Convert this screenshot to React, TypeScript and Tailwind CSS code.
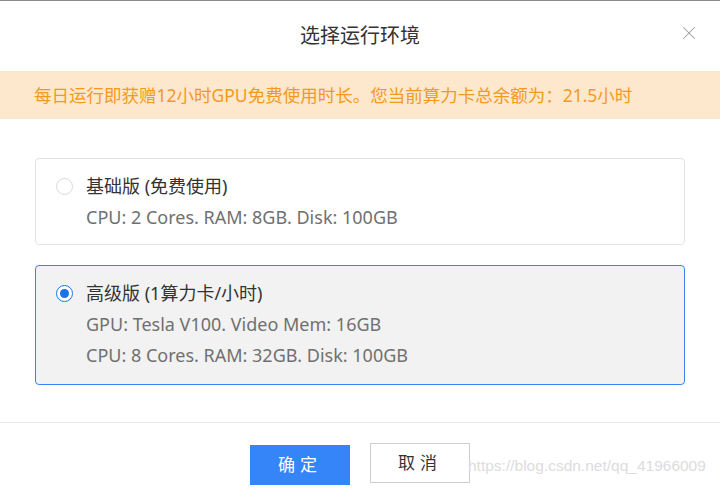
import { X } from 'lucide-react';

const font = { fontFamily: '"Noto Sans", "Noto Sans CJK SC", sans-serif' };

function Radio({ checked }: { checked: boolean }) {
  return checked ? (
    <span className="flex h-[17px] w-[17px] shrink-0 items-center justify-center rounded-full border-[1.5px] border-[#1a73e8] bg-white">
      <span className="h-[9px] w-[9px] rounded-full bg-[#1a73e8]" />
    </span>
  ) : (
    <span className="h-[17px] w-[17px] shrink-0 rounded-full border border-[#d9d9d9] bg-white" />
  );
}

export default function App() {
  return (
    <div
      className="relative h-[497px] w-[720px] overflow-hidden border-t border-[#8a8a8a] bg-white"
      style={font}
    >
      <div className="relative flex h-[70px] items-center justify-center">
        <span className="text-[20px] text-[#333]">选择运行环境</span>
        <button className="absolute right-[20px] top-[21px] text-[#a0a0a0]">
          <X size={22} strokeWidth={1.1} />
        </button>
      </div>

      <div className="flex h-[48px] items-center bg-[#fde7cd] px-[34px] text-[17.5px] text-[#f39a1e]">
        每日运行即获赠12小时GPU免费使用时长。您当前算力卡总余额为：21.5小时
      </div>

      <div className="flex flex-col gap-[20px] px-[35px] pt-[39px]">
        <div className="flex items-start gap-[13px] rounded border border-[#e3e3e3] bg-white pb-[11px] pl-[20px] pt-[12px]">
          <div className="flex h-[31px] items-center">
            <Radio checked={false} />
          </div>
          <div className="flex flex-col text-[18px] leading-[31px]">
            <span className="text-[#333]">基础版 (免费使用)</span>
            <span className="text-[#707070]">CPU: 2 Cores. RAM: 8GB. Disk: 100GB</span>
          </div>
        </div>

        <div className="flex items-start gap-[13px] rounded border border-[#3b82f0] bg-[#f2f2f2] pb-[13px] pl-[20px] pt-[12px]">
          <div className="flex h-[31px] items-center">
            <Radio checked />
          </div>
          <div className="flex flex-col text-[18px] leading-[31px]">
            <span className="text-[#333]">高级版 (1算力卡/小时)</span>
            <span className="text-[#707070]">GPU: Tesla V100. Video Mem: 16GB</span>
            <span className="text-[#707070]">CPU: 8 Cores. RAM: 32GB. Disk: 100GB</span>
          </div>
        </div>
      </div>

      <div className="mt-[37px] border-t border-[#e8e8e8]" />

      <div className="flex items-start justify-center gap-[20px] pt-[20px]">
        <button className="mt-[2px] flex h-[40px] w-[100px] items-center justify-center bg-[#3685f8] text-[17px] tracking-[5px] text-white">
          确定
        </button>
        <button className="flex h-[40px] w-[100px] items-center justify-center border border-[#cfcfcf] bg-white text-[17px] tracking-[5px] text-[#333]">
          取消
        </button>
      </div>

      <span
        className="absolute left-[468px] top-[453px] text-[15.5px] text-[#dcdcdc]"
        style={{ fontFamily: '"Liberation Sans", Arial, sans-serif' }}
      >
        https://blog.csdn.net/qq_41966009
      </span>
    </div>
  );
}
